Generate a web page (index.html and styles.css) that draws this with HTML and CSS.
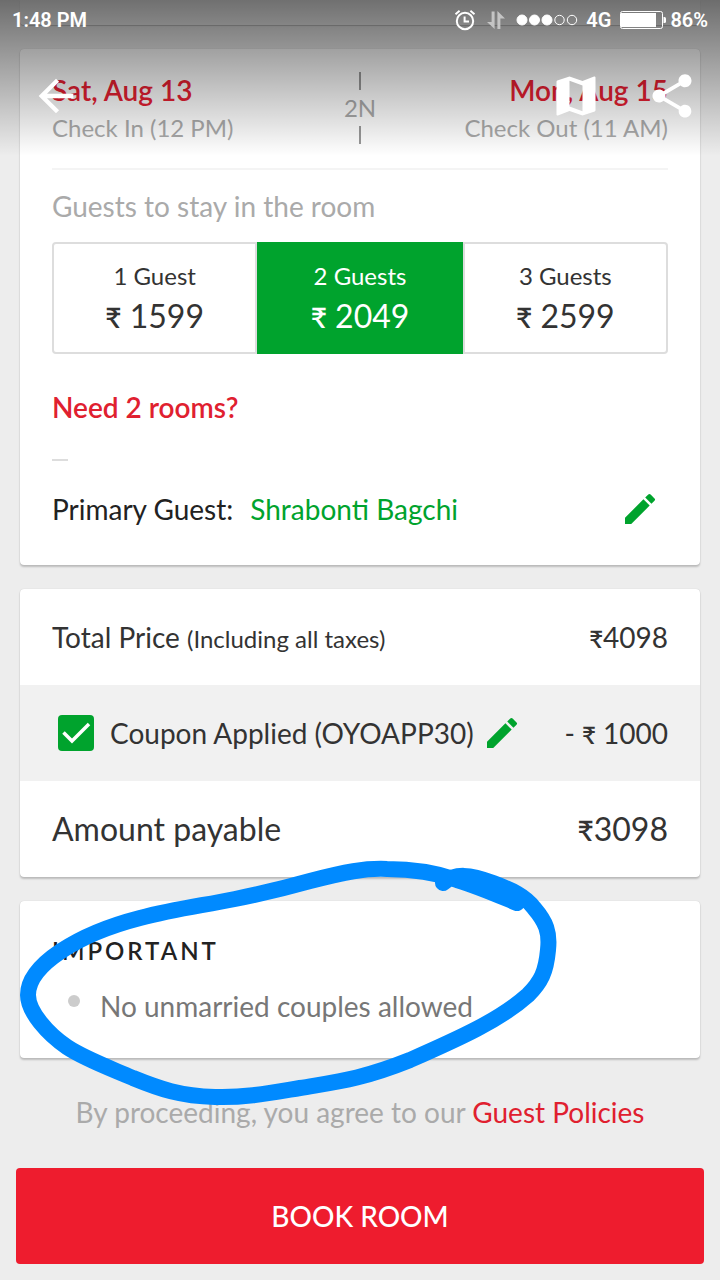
FILE: index.html
```html
<!DOCTYPE html>
<html lang="en">
<head>
<meta charset="utf-8">
<meta name="viewport" content="width=device-width, initial-scale=1">
<title>Book room</title>
<link rel="stylesheet" href="styles.css">
</head>
<body>
<header class="topbar">
  <div class="status">
    <span class="status-time">1:48 PM</span>
    <svg class="status-alarm" viewBox="0 0 22 22" width="22" height="22" fill="none" stroke="#fff" stroke-width="2"><circle cx="11" cy="12" r="8.2"/><path d="M10.6 7.5v5h4.4M1.5 5.2 5.6 1.8M20.5 5.2 16.4 1.8"/></svg>
    <svg class="status-data" viewBox="0 0 20 20" width="20" height="20" fill="#c4c4c4"><path d="M5.600 1.500h3V19L1 12h4.600zM11.400 19h3V8.500H19L11.400 1z"/></svg>
    <svg class="status-signal" viewBox="0 0 62 12" width="62" height="12" fill="#fff" stroke="#fff"><circle cx="6" cy="6" r="5"/><circle cx="18.500" cy="6" r="5"/><circle cx="31" cy="6" r="5"/><circle cx="43.500" cy="6" r="4.700" fill="none"/><circle cx="56" cy="6" r="4.700" fill="none"/></svg>
    <span class="status-net">4G</span>
    <svg class="status-battery" viewBox="0 0 46 18" width="46" height="18"><rect x=".5" y=".5" width="42" height="17" rx="2" fill="none" stroke="#fff"/><rect x="1" y="2" width="35" height="14" fill="#fff"/><path d="M43.500 6h1a1.500 1.500 0 0 1 1.500 1.500v3a1.500 1.500 0 0 1-1.500 1.500h-1z" fill="#fff"/></svg>
    <span>86%</span>
  </div>
  <nav class="toolbar">
    <button class="icon-btn" type="button" aria-label="Back"><svg viewBox="0 0 24 24" width="52" height="52" fill="#fff"><path d="M20 11H7.830l5.590-5.590L12 4l-8 8 8 8 1.410-1.410L7.830 13H20z"/></svg></button>
    <button class="icon-btn push" type="button" aria-label="Map"><svg viewBox="0 0 24 24" width="52" height="52" fill="#fff"><path d="M20.500 3l-.16.030L15 5.100 9 3 3.360 4.900c-.21.070-.36.250-.36.480V20.500c0 .280.220.500.500.500l.160-.030L9 18.900l6 2.100 5.640-1.900c.210-.070.360-.250.360-.480V3.500c0-.280-.220-.500-.500-.500zM15 19l-6-2.110V5l6 2.110z"/></svg></button>
    <button class="icon-btn" type="button" aria-label="Share"><svg viewBox="0 0 24 24" width="52" height="52" fill="#fff"><path d="M18 16.080c-.76 0-1.440.300-1.960.770L8.910 12.700c.050-.230.090-.460.090-.700s-.040-.470-.090-.700l7.050-4.110c.540.500 1.250.810 2.040.810 1.660 0 3-1.340 3-3s-1.340-3-3-3-3 1.340-3 3c0 .240.040.470.090.700L8.040 9.810C7.500 9.310 6.790 9 6 9c-1.660 0-3 1.340-3 3s1.340 3 3 3c.790 0 1.500-.310 2.040-.810l7.120 4.160c-.050.210-.080.430-.080.650 0 1.610 1.310 2.920 2.920 2.920s2.920-1.310 2.920-2.920-1.310-2.920-2.920-2.920z"/></svg></button>
  </nav>
</header>

<main class="page">
  <div class="card card-prev"></div>

  <section class="card stay">
    <div class="dates">
      <div>
        <div class="date">Sat, Aug 13</div>
        <div class="date-note">Check In (12 PM)</div>
      </div>
      <div class="nights">2N</div>
      <div class="date-out">
        <div class="date">Mon, Aug 15</div>
        <div class="date-note">Check Out (11 AM)</div>
      </div>
    </div>
    <fieldset class="guests">
      <legend class="guests-title">Guests to stay in the room</legend>
      <div class="options">
        <label class="option"><input class="option-input" type="radio" name="guests"><span class="option-name">1 Guest</span><span class="option-price"><span class="rupee">₹</span> 1599</span></label>
        <label class="option"><input class="option-input" type="radio" name="guests" checked><span class="option-name">2 Guests</span><span class="option-price"><span class="rupee">₹</span> 2049</span></label>
        <label class="option"><input class="option-input" type="radio" name="guests"><span class="option-name">3 Guests</span><span class="option-price"><span class="rupee">₹</span> 2599</span></label>
      </div>
    </fieldset>
    <a class="more-rooms" href="#rooms">Need 2 rooms?</a>
    <div class="dash"></div>
    <div class="primary">
      <span>Primary Guest:</span>
      <span class="guest-name">Shrabonti Bagchi</span>
      <button class="icon-btn push edit-guest" type="button" aria-label="Edit guest"><svg viewBox="0 0 24 24" width="40" height="40" fill="#00a32d"><path d="M3 17.250V21h3.750L17.810 9.940l-3.750-3.750zM20.710 7.040a1 1 0 0 0 0-1.410l-2.340-2.340a1 1 0 0 0-1.410 0l-1.830 1.830 3.750 3.750z"/></svg></button>
    </div>
  </section>

  <section class="card">
    <div class="row">
      <span>Total Price <span class="small">(Including all taxes)</span></span>
      <span class="push"><span class="rupee">₹</span>4098</span>
    </div>
    <div class="row row-coupon">
      <span class="check">
        <input class="check-input" type="checkbox" id="coupon" checked>
        <svg class="check-mark" viewBox="0 0 36 36" width="36" height="36" fill="none" stroke="#fff" stroke-width="3.500"><path d="M5.500 17.500 14 26 31 9"/></svg>
      </span>
      <label class="coupon-label" for="coupon">Coupon Applied (OYOAPP30)</label>
      <button class="icon-btn edit-coupon" type="button" aria-label="Edit coupon"><svg viewBox="0 0 24 24" width="40" height="40" fill="#00a32d"><path d="M3 17.250V21h3.750L17.810 9.940l-3.750-3.750zM20.710 7.040a1 1 0 0 0 0-1.410l-2.340-2.340a1 1 0 0 0-1.410 0l-1.830 1.830 3.750 3.750z"/></svg></button>
      <span class="push">- <span class="rupee">₹</span> 1000</span>
    </div>
    <div class="row row-total">
      <span>Amount payable</span>
      <span class="push"><span class="rupee">₹</span>3098</span>
    </div>
  </section>

  <section class="card notice">
    <h2 class="notice-title">IMPORTANT</h2>
    <ul class="notice-list"><li class="notice-item">No unmarried couples allowed</li></ul>
    <svg class="marker" viewBox="20 860 540 246" width="540" height="246" fill="none" stroke="#008aff" stroke-width="16" stroke-linecap="round" stroke-linejoin="round"><path d="M443 883C455 873 470 874 493 883C512 890 525 896 534 908C546 922 550 932 548 950C546 972 541 982 528 995C500 1020 460 1038 410 1060C360 1080 335 1082 300 1088C270 1093 245 1098 215 1097C180 1096 160 1089 133 1078C110 1068 85 1059 67 1047C48 1034 28 1012 28 995C28 965 78 934 140 918C175 909 200 906 235 899C265 893 285 888 310 881C345 872 365 868 387 869C415 869 440 874 457 880C480 887 500 896 517 903M450 878 475 880 500 890 522 900"/></svg>
  </section>

  <p class="terms">By proceeding, you agree to our <a class="terms-link" href="#policies">Guest Policies</a></p>
  <button class="book" type="button">BOOK ROOM</button>
</main>
</body>
</html>
```

FILE: styles.css
```css
* {
  box-sizing: border-box;
}

body {
  margin: 0;
  background: #ededed;
  color: #333;
  font-family: Lato, "Noto Sans", sans-serif;
  font-size: 28px;
  line-height: 36px;
}

/* Status bar and toolbar float over the scrolled page */
.topbar {
  position: absolute;
  top: 0;
  left: 0;
  right: 0;
  z-index: 2;
  height: 156px;
  background: linear-gradient(rgba(0, 0, 0, 0.54), rgba(0, 0, 0, 0));
}

.status {
  display: flex;
  align-items: center;
  height: 40px;
  padding: 0 12px;
  color: #fff;
  font-family: Roboto, sans-serif;
  font-size: 20px;
  font-weight: 600;
  line-height: 24px;
}

.status-time {
  margin-right: auto;
}

.status-data {
  margin-left: 10px;
}

.status-signal {
  margin: 0 8px 0 10px;
}

.status-battery {
  margin: 0 4px 0 9px;
}

.toolbar {
  display: flex;
  align-items: center;
  gap: 44px;
  height: 112px;
  padding: 0 22px 0 30px;
}

.icon-btn {
  display: flex;
  padding: 0;
  border: 0;
  background: none;
}

.push {
  margin-left: auto;
}

.page {
  display: flex;
  flex-direction: column;
  gap: 24px;
  padding-bottom: 16px;
}

.card {
  margin: 0 20px;
  border-radius: 4px;
  background: #fff;
  box-shadow: 0 2px 2px rgba(0, 0, 0, 0.2), 0 0 1px rgba(0, 0, 0, 0.2);
}

.card-prev {
  height: 25px;
  border-radius: 0 0 4px 4px;
  background: #f4f4f4;
  box-shadow: 0 1px 1px rgba(0, 0, 0, 0.2);
}

.stay {
  padding: 23px 32px 38px;
}

.dates {
  display: grid;
  grid-template-columns: 1fr auto 1fr;
  padding-bottom: 24px;
  border-bottom: 2px solid #f4f4f4;
}

.date {
  color: #e82032;
  font-weight: 600;
}

.date-note {
  margin-top: 4px;
  color: #aaa;
  font-size: 24px;
  line-height: 32px;
}

.date-out {
  text-align: right;
}

.nights {
  display: flex;
  flex-direction: column;
  align-items: center;
  justify-content: space-between;
  color: #aaa;
  font-size: 24px;
}

.nights::before,
.nights::after {
  content: "";
  width: 2px;
  height: 18px;
  background: #999;
}

.guests {
  min-width: 0;
  margin: 18px 0 0;
  padding: 0;
  border: 0;
}

.guests-title {
  padding: 0;
  color: #aaa;
}

.options {
  display: flex;
  margin-top: 18px;
}

.option {
  display: flex;
  flex: 1;
  flex-direction: column;
  align-items: center;
  height: 112px;
  padding-top: 16px;
  border: 2px solid #ddd;
}

.option:first-child {
  border-radius: 4px 0 0 4px;
}

.option:last-child {
  border-radius: 0 4px 4px 0;
}

.option:has(:checked) {
  border-color: #00a32d;
  background: #00a32d;
  color: #fff;
}

.option-input {
  position: absolute;
  opacity: 0;
}

.option-name {
  font-size: 24px;
  line-height: 32px;
}

.option-price {
  font-size: 32px;
  line-height: 48px;
}

.rupee {
  font-size: 24px;
  font-weight: 600;
  line-height: 1;
}

.option-price .rupee,
.row-total .rupee {
  font-size: 28px;
}

.more-rooms {
  display: block;
  margin-top: 35px;
  color: #e0202f;
  font-weight: 600;
  text-decoration: none;
}

.dash {
  width: 16px;
  height: 2px;
  margin: 34px 0 30px;
  background: #ddd;
}

.primary {
  display: flex;
  align-items: center;
  gap: 17px;
  height: 36px;
  color: #222;
}

.guest-name {
  color: #00a32d;
}

.edit-guest {
  margin-right: 8px;
}

.row {
  display: flex;
  align-items: center;
  height: 96px;
  padding: 0 32px;
}

.row-coupon {
  background: #f1f1f1;
}

.row-total {
  font-size: 32px;
}

.small {
  font-size: 24px;
  line-height: 1;
}

.check {
  display: grid;
  margin: 0 16px 0 6px;
}

.check-input,
.check-mark {
  grid-area: 1 / 1;
}

.check-input {
  width: 36px;
  height: 36px;
  margin: 0;
  border-radius: 4px;
  background: #00a32d;
  appearance: none;
}

.check-mark {
  pointer-events: none;
}

.edit-coupon {
  margin-left: 8px;
}

.notice {
  position: relative;
  padding: 32px 32px 34px;
}

.notice-title {
  margin: 0;
  color: #222;
  font-size: 24px;
  font-weight: 600;
  letter-spacing: 3px;
}

.notice-list {
  margin: 19px 0 0;
  padding: 0;
  list-style: none;
}

.notice-item {
  display: flex;
  gap: 20px;
  padding-left: 16px;
  color: #777;
}

.notice-item::before {
  content: "";
  width: 12px;
  height: 12px;
  margin-top: 7px;
  border-radius: 50%;
  background: #ccc;
}

/* Hand-drawn ring around the notice */
.marker {
  position: absolute;
  top: -41px;
  left: 0;
}

.terms {
  margin: 12px 0 14px;
  color: #aaa;
  text-align: center;
}

.terms-link {
  color: #e0202f;
  text-decoration: none;
}

.book {
  height: 96px;
  margin: 0 16px;
  border: 0;
  border-radius: 4px;
  background: #ee1c2e;
  color: #fff;
  font: inherit;
  font-weight: 500;
}
```
